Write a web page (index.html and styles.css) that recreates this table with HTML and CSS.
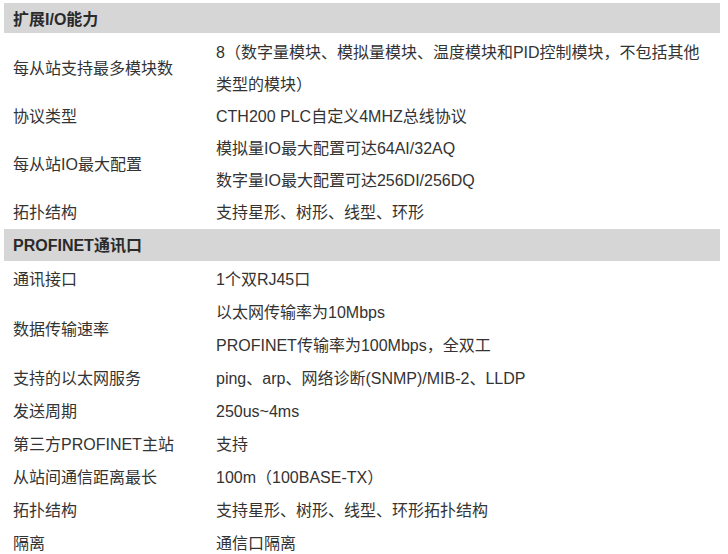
FILE: index.html
```html
<!DOCTYPE html>
<html lang="zh-CN">
<head>
<meta charset="utf-8">
<title>规格参数</title>
<link rel="stylesheet" href="styles.css">
</head>
<body>
<div class="spec">
  <div class="section section-first">扩展I/O能力</div>
  <div class="group group-a">
    <div class="row"><div class="label">每从站支持最多模块数</div><div class="value">8（数字量模块、模拟量模块、温度模块和PID控制模块，不包括其他<br>类型的模块）</div></div>
    <div class="row"><div class="label">协议类型</div><div class="value">CTH200 PLC自定义4MHZ总线协议</div></div>
    <div class="row"><div class="label">每从站IO最大配置</div><div class="value">模拟量IO最大配置可达64AI/32AQ<br>数字量IO最大配置可达256DI/256DQ</div></div>
    <div class="row"><div class="label">拓扑结构</div><div class="value">支持星形、树形、线型、环形</div></div>
  </div>
  <div class="section">PROFINET通讯口</div>
  <div class="group group-b">
    <div class="row"><div class="label">通讯接口</div><div class="value">1个双RJ45口</div></div>
    <div class="row"><div class="label">数据传输速率</div><div class="value">以太网传输率为10Mbps<br>PROFINET传输率为100Mbps，全双工</div></div>
    <div class="row"><div class="label">支持的以太网服务</div><div class="value">ping、arp、网络诊断(SNMP)/MIB-2、LLDP</div></div>
    <div class="row"><div class="label">发送周期</div><div class="value">250us~4ms</div></div>
    <div class="row"><div class="label">第三方PROFINET主站</div><div class="value">支持</div></div>
    <div class="row"><div class="label">从站间通信距离最长</div><div class="value">100m（100BASE-TX）</div></div>
    <div class="row"><div class="label">拓扑结构</div><div class="value">支持星形、树形、线型、环形拓扑结构</div></div>
    <div class="row"><div class="label">隔离</div><div class="value">通信口隔离</div></div>
  </div>
</div>
</body>
</html>
```

FILE: styles.css
```css
html, body {
  margin: 0;
  padding: 0;
  background: #ffffff;
}

body {
  font-family: "Liberation Sans", "Noto Sans CJK SC", sans-serif;
  font-size: 16px;
  color: #333333;
}

.spec {
  width: 716px;
  margin-left: 4px;
  padding-top: 3px;
}

.section {
  background: #d6d6d6;
  height: 32px;
  line-height: 34px;
  padding-left: 9px;
  font-weight: bold;
  color: #2a2a2a;
}

.section-first {
  height: 30px;
  line-height: 34px;
}

.group-a {
  padding-top: 4px;
}

.group-b {
  padding-top: 2px;
}

.row {
  display: grid;
  grid-template-columns: 203px 1fr;
  align-items: center;
  padding-left: 9px;
}

.group-a .row {
  line-height: 32px;
}

.group-b .row {
  line-height: 33px;
}

.label {
  white-space: nowrap;
}

.value {
  white-space: nowrap;
}
```
